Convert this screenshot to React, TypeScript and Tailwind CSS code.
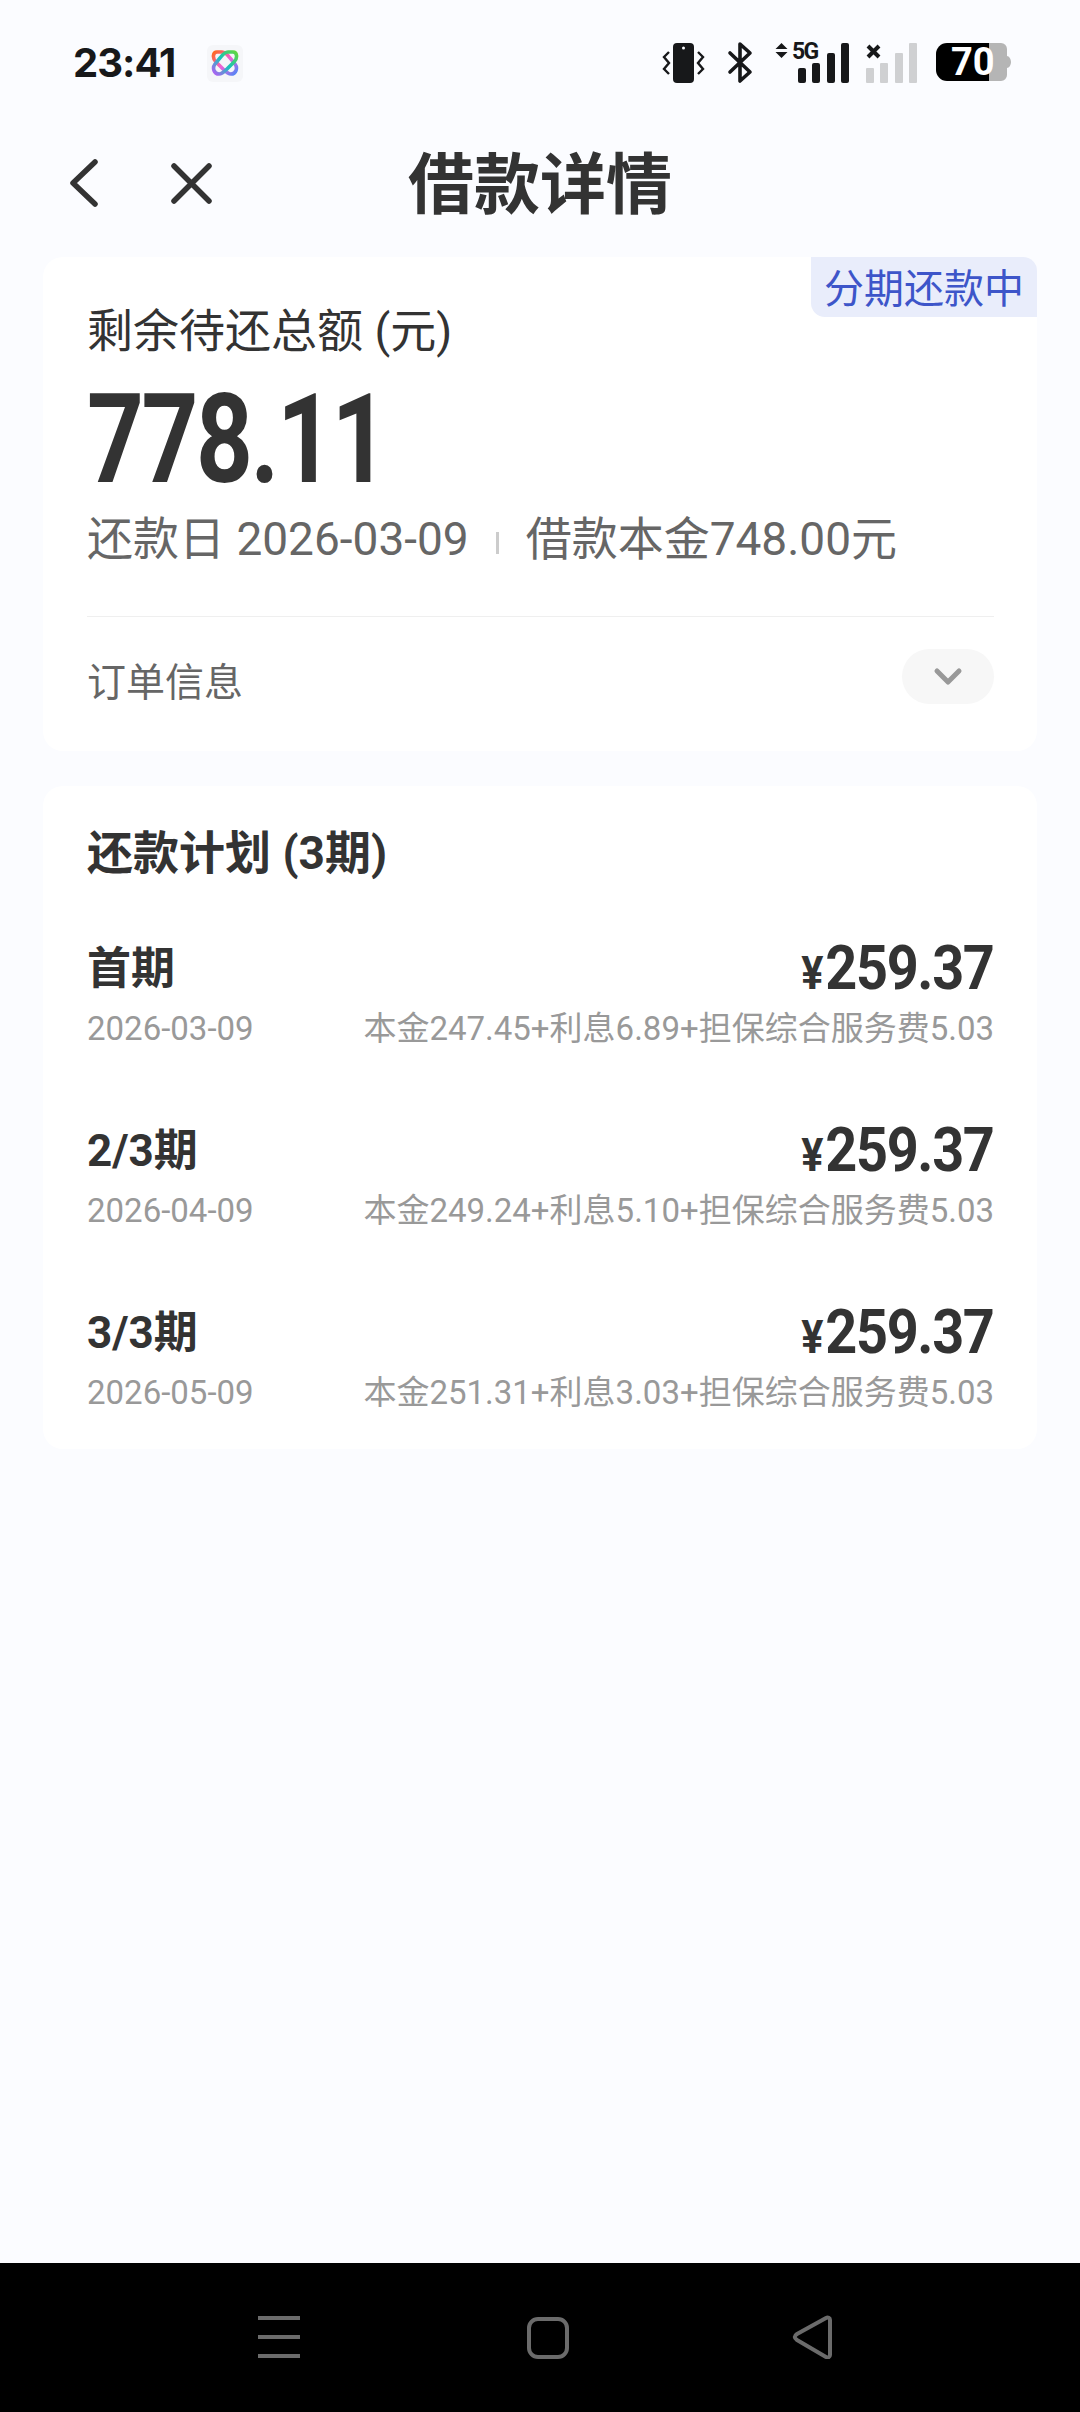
const cjk = "font-['Roboto','Noto_Sans_CJK_SC',sans-serif]";

const plans = [
  { label: "首期", date: "2026-03-09", detail: "本金247.45+利息6.89+担保综合服务费5.03" },
  { label: "2/3期", date: "2026-04-09", detail: "本金249.24+利息5.10+担保综合服务费5.03" },
  { label: "3/3期", date: "2026-05-09", detail: "本金251.31+利息3.03+担保综合服务费5.03" },
];

function AppLogo() {
  return (
    <div className="ml-[32px] flex h-[37px] w-[36px] items-center justify-center rounded-md bg-[#f5f6f9]">
      <svg width="28" height="28" viewBox="0 0 28 28" fill="none" strokeWidth="3.6">
        <defs>
          <linearGradient id="a" x1="0" y1="0" x2="1" y2="1">
            <stop offset="0" stopColor="#ff6a1f" />
            <stop offset="0.5" stopColor="#ee62d8" />
            <stop offset="1" stopColor="#4f86f7" />
          </linearGradient>
          <linearGradient id="b" x1="1" y1="0" x2="0" y2="1">
            <stop offset="0" stopColor="#62d63f" />
            <stop offset="0.5" stopColor="#16c4bb" />
            <stop offset="1" stopColor="#b25ef5" />
          </linearGradient>
        </defs>
        <path d="M6 3h5c3 0 5 2 8 6l5 6c3 4 1 10-4 10-3 0-5-2-8-5L5 13C1 9 2 3 6 3z" stroke="url(#a)" />
        <path d="M22 3h-5c-3 0-5 2-8 6l-5 6c-3 4-1 10 4 10 3 0 5-2 8-5l7-7c4-4 3-10-1-10z" stroke="url(#b)" />
      </svg>
    </div>
  );
}

function StatusIcons() {
  return (
    <svg width="352" height="44" viewBox="0 0 352 44" className="block">
      {/* vibrate */}
      <rect x="14" y="2" width="21" height="40" rx="4" fill="#17181a" />
      <circle cx="24.5" cy="7" r="1.5" fill="#fbfcff" />
      <path d="M10 11l-5 5 5 6-5 6 5 5M39 11l5 5-5 6 5 6-5 5" fill="none" stroke="#17181a" strokeWidth="2.4" />
      {/* bluetooth */}
      <path d="M71 12l20 19-10 9V3l10 9-20 19" fill="none" stroke="#17181a" strokeWidth="3.6" strokeLinecap="round" strokeLinejoin="round" />
      {/* 5G arrows */}
      <path d="M122.5 2l6 6h-12zM122.5 17l6-6h-12z" fill="#17181a" />
      {/* sim 1 */}
      <rect x="139" y="27" width="8" height="15" rx="2" fill="#17181a" />
      <rect x="153" y="22" width="8" height="20" rx="2" fill="#17181a" />
      <rect x="168" y="12" width="8" height="30" rx="2" fill="#17181a" />
      <rect x="182" y="2" width="8" height="40" rx="2" fill="#17181a" />
      {/* sim 2 */}
      <path d="M209 5l11 11M220 5L209 16" stroke="#17181a" strokeWidth="4" />
      <rect x="207" y="27" width="8" height="15" rx="1" fill="#cfd0d2" />
      <rect x="221" y="22" width="8" height="20" rx="1" fill="#cfd0d2" />
      <rect x="236" y="12" width="8" height="30" rx="1" fill="#cfd0d2" />
      <rect x="250" y="2" width="8" height="40" rx="1" fill="#cfd0d2" />
      {/* battery */}
      <path d="M330 2h12a6 6 0 0 1 6 6v7c2 0 4 3 4 6s-2 6-4 6v7a6 6 0 0 1-6 6h-12z" fill="#b5b5b5" />
      <path d="M330 2h-42a11 11 0 0 0-11 11v16a11 11 0 0 0 11 11h42z" fill="#000" />
    </svg>
  );
}

function Plan({ label, date, detail }: { label: string; date: string; detail: string }) {
  return (
    <div className="mb-[71px] last:mb-0">
      <div className="flex h-[62px] items-center justify-between">
        <span className="text-[44px] font-bold text-[#333]">{label}</span>
        <span className="mb-[4px] flex origin-right scale-x-[0.9] items-baseline font-bold text-[#333]">
          <span className="mr-[2px] text-[46px]">¥</span>
          <span className="text-[62px] tracking-[-1.5px]">259.37</span>
        </span>
      </div>
      <div className="mt-[9px] flex h-[40px] items-center justify-between text-[#999]">
        <span className="text-[33px]">{date}</span>
        <span className="text-[33px]">{detail}</span>
      </div>
    </div>
  );
}

export default function App() {
  return (
    <div className={`flex h-[2412px] w-[1080px] flex-col overflow-hidden bg-[#fbfcff] ${cjk}`}>
      {/* status bar */}
      <div className="flex h-[126px] items-start justify-between pt-[41px] pl-[73px] pr-[69px]">
        <div className="flex h-[44px] items-center">
          <span className="font-['Inter'] text-[40px] font-bold tracking-[-1px] text-[#17181a]">23:41</span>
          <AppLogo />
        </div>
        <div className="relative">
          <StatusIcons />
          <span className="absolute left-[133px] top-[-4px] font-['Roboto'] text-[23px] font-bold leading-[30px] tracking-[-1.8px] text-[#17181a]">5G</span>
          <span className="absolute left-[292px] top-[-4px] font-['Roboto'] text-[38px] font-bold leading-[50px] text-white">70</span>
        </div>
      </div>

      {/* nav */}
      <div className="relative flex h-[131px] items-center justify-center">
        <div className="absolute left-[67px] top-[31px] flex items-center gap-[67px]">
          <svg width="34" height="52" viewBox="0 0 34 52" fill="none" stroke="#333" strokeWidth="5.5" strokeLinecap="round" strokeLinejoin="round">
            <path d="M28 5L6 26l22 21" />
          </svg>
          <svg width="46" height="46" viewBox="0 0 46 46" fill="none" stroke="#333" strokeWidth="5.5" strokeLinecap="round">
            <path d="M6 6l35 35M41 6L6 41" />
          </svg>
        </div>
        <h1 className="mb-[13px] text-[66px] font-bold text-[#333]">借款详情</h1>
      </div>

      {/* summary card */}
      <div className="relative mx-[43px] h-[494px] rounded-[20px] bg-white pl-[44px] pr-[43px]">
        <div className="absolute right-0 top-0 flex h-[60px] w-[226px] items-center justify-center rounded-tr-[14px] rounded-bl-[14px] bg-[#e9edfb] pt-[6px] text-[40px] text-[#3d55c9]">
          分期还款中
        </div>
        <p className="pt-[42px] text-[46px] leading-[64px] text-[#333]">剩余待还总额 (元)</p>
        <p className="mt-[14px] origin-left scale-x-[0.8] text-[124px] font-bold leading-[126px] tracking-[-3px] text-[#333]">778.11</p>
        <div className="mt-[1px] flex h-[70px] items-center text-[46px] text-[#666]">
          <span>还款日 2026-03-09</span>
          <span className="mx-[27px] mt-[8px] h-[22px] w-[3px] bg-[#ccc]" />
          <span>借款本金748.00元</span>
        </div>
        <div className="mt-[42px] h-[1px] bg-[#efefef]" />
        <div className="flex h-[93px] items-start justify-between pt-[32px]">
          <span className="mt-[6px] text-[39px] leading-[56px] text-[#666]">订单信息</span>
          <span className="flex h-[55px] w-[92px] items-center justify-center rounded-full bg-[#f7f7f7]">
            <svg width="30" height="20" viewBox="0 0 30 20" fill="none" stroke="#999" strokeWidth="5" strokeLinecap="round" strokeLinejoin="round">
              <path d="M4 4l11 11L26 4" />
            </svg>
          </span>
        </div>
      </div>

      {/* plan card */}
      <div className="mx-[43px] mt-[35px] h-[663px] rounded-[20px] bg-white pl-[44px] pr-[43px]">
        <h2 className="pt-[36px] text-[46px] font-bold leading-[62px] text-[#333]">还款计划 (3期)</h2>
        <div className="mt-[54px]">
          {plans.map((p) => (
            <Plan key={p.date} {...p} />
          ))}
        </div>
      </div>

      {/* android nav */}
      <div className="mt-auto flex h-[149px] items-start bg-black pt-[52px]">
        <svg width="1080" height="44" viewBox="0 0 1080 44" fill="none" stroke="#6b6b6b" strokeWidth="4">
          <path d="M258 3h42M258 22h42M258 41h42" />
          <rect x="529" y="4" width="38" height="38" rx="9" />
          <path d="M830 5c0-2-2-3-4-2L797 19c-3 2-3 4 0 6l29 17c2 1 4 0 4-2z" strokeLinejoin="round" />
        </svg>
      </div>
    </div>
  );
}
